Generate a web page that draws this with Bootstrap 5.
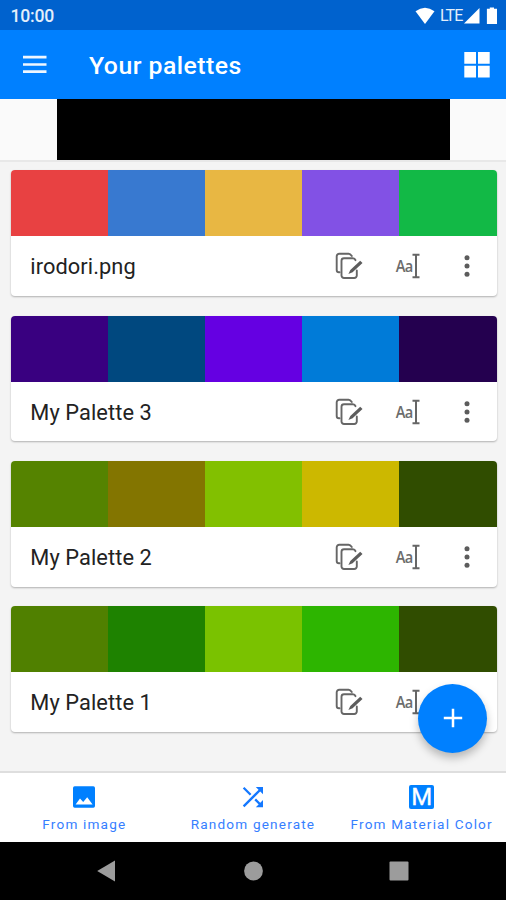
<!DOCTYPE html>
<html lang="en">
<head>
<meta charset="utf-8">
<meta name="viewport" content="width=device-width, initial-scale=1">
<title>Your palettes</title>
<link href="https://cdn.jsdelivr.net/npm/bootstrap@5.3.0/dist/css/bootstrap.min.css" rel="stylesheet">
<style>
  body { font-family: Roboto, "Liberation Sans", sans-serif; background: #f4f4f4; width: 506px; height: 900px; overflow: hidden; }
  svg { display: block; flex: none; overflow: visible; }
  .status { height: 30px; background: #0062ce; padding: 1px 8px 0 10.5px; font-size: 17.6px; color: #e3eefb; }
  .status-time { font-weight: 500; letter-spacing: -.2px; padding-top: 2px; }
  .status-net { font-size: 16px; width: 28px; letter-spacing: -.9px; line-height: 20px; padding-left: 5px; }
  .appbar { height: 69px; background: #0080ff; padding: 0 16px 0 22px; }
  .appbar h1 { font-size: 24.8px; font-weight: 500; letter-spacing: .48px; line-height: 30px; margin: 2px 0 0 41px; }
  .banner { height: 63px; background: #fafafa; border-bottom: 2px solid #e8e8e8; }
  .banner-slot { width: 393px; height: 61px; margin-left: 57px; background: #000; }
  .palettes { padding: 8.4px 9.5px 0 10.5px; gap: 19.6px; }
  .palette { height: 125.75px; border-radius: 4px; box-shadow: 0 1px 2px rgba(0,0,0,.28); }
  .swatches { height: 66px; border-radius: 4px 4px 0 0; }
  .palette-name { font-size: 21.8px; letter-spacing: .08px; color: #222; padding-top: 3px; }
  .palette-row { padding: 0 19px 0 19.8px; }
  .rename { width: 25px; height: 28px; margin: 0 36px 0 32px; }
  .rename span { font: 600 17px/28px "Open Sans", "Noto Sans", sans-serif; color: #6c6c6c; width: 17px; letter-spacing: -1px; display: inline-block; transform: scaleX(.86); transform-origin: 0 50%; padding-left: 1px; }
  .fab { right: 19px; bottom: 18.5px; width: 69px; height: 69px; background: #0080ff; box-shadow: 0 5px 8px rgba(0,0,0,.25); }
  .tabs { height: 71px; border-top: 2px solid #dedede; font-size: 13.6px; letter-spacing: 1.17px; }
  .tabs a { flex: 1 1 0; padding-top: 12px; line-height: 18px; gap: 6px; color: #367eff; }
  .m-icon { width: 25px; height: 24px; border-radius: 2px; background: #0080ff; font: 400 24px/25px Roboto, sans-serif; letter-spacing: 0; -webkit-text-stroke: .3px #fff; }
  .sysnav { height: 58px; background: #000; }
  .c0{background:#e84142}.c1{background:#3879d0}.c2{background:#e8b743}.c3{background:#8251e5}.c4{background:#12b946}
  .c5{background:#390080}.c6{background:#00487f}.c7{background:#6500e2}.c8{background:#007bd8}.c9{background:#24004f}
  .c10{background:#558300}.c11{background:#837500}.c12{background:#82c000}.c13{background:#ccb800}.c14{background:#304d00}
  .c15{background:#508000}.c16{background:#1e8200}.c17{background:#7ac200}.c18{background:#2db500}.c19{background:#304d00}
</style>
</head>
<body class="d-flex flex-column">
<svg width="0" height="0" class="position-absolute">
  <symbol id="copyedit" viewBox="0 0 28 28">
    <g fill="none" stroke="#666" stroke-width="1.9" stroke-linejoin="round" stroke-linecap="round">
      <path d="M4.6 20.3H4a2.3 2.3 0 0 1-2.3-2.3V4.3A2.6 2.6 0 0 1 4.3 1.7H13.6Q15.3 1.7 16.8 4"/>
      <path d="M20.5 8.2Q19.8 6.3 17.8 6.3H9A2.5 2.5 0 0 0 6.5 8.8V23.5A2.5 2.5 0 0 0 9 26H19.3A2.5 2.5 0 0 0 21.8 23.5V18.5"/>
    </g>
    <path d="M25.2 8.7L27.5 11L17.6 20.3L13.4 22L15.3 18Z" fill="#5c5c5c"/>
  </symbol>
  <symbol id="beam" viewBox="0 0 8 28">
    <path d="M.5 2.8H7.5M.5 25.2H7.5M4 2.8V25.2" fill="none" stroke="#666" stroke-width="2"/>
  </symbol>
  <symbol id="more" viewBox="0 0 22 28">
    <g fill="#5c5c5c"><circle cx="11" cy="5.7" r="2.5"/><circle cx="11" cy="14" r="2.5"/><circle cx="11" cy="22.3" r="2.5"/></g>
  </symbol>
</svg>

<div class="status d-flex align-items-center justify-content-between">
  <span class="status-time">10:00</span>
  <div class="d-flex align-items-center">
    <svg width="20" height="18" viewBox="0 0 20 18"><path d="M.5 4.2Q10-2.8 19.5 4.2L10 17Z" fill="#fff"/></svg>
    <span class="status-net">LTE</span>
    <svg width="17" height="18" viewBox="1 0 17 18"><path d="M17.5 1V16.5H2Z" fill="#fff"/></svg>
    <svg width="18" height="18" viewBox="0 0 18 18"><path d="M6.9 1.8H9.8V.5H14V1.8H17V17H6.9Z" fill="#fff"/></svg>
  </div>
</div>

<header class="appbar d-flex align-items-center text-white">
  <svg width="26" height="20" viewBox="0 0 26 20"><path d="M1 2.2H24.5M1 9.5H24.5M1 16.7H24.5" stroke="#eef6ff" stroke-width="2.7"/></svg>
  <h1>Your palettes</h1>
  <svg class="ms-auto" width="26" height="26" viewBox="0 0 26 26"><path d="M.3 0H12V11.7H.3ZM14 0H25.7V11.7H14ZM.3 13.7H12V25.4H.3ZM14 13.7H25.7V25.4H14Z" fill="#fff"/></svg>
</header>

<div class="banner"><div class="banner-slot"></div></div>

<main class="palettes position-relative flex-grow-1 d-flex flex-column">
  <section class="palette bg-white d-flex flex-column">
    <div class="swatches d-flex overflow-hidden"><i class="c0 flex-fill"></i><i class="c1 flex-fill"></i><i class="c2 flex-fill"></i><i class="c3 flex-fill"></i><i class="c4 flex-fill"></i></div>
    <div class="palette-row d-flex align-items-center flex-grow-1">
      <span class="palette-name me-auto">irodori.png</span>
      <svg width="28" height="28"><use href="#copyedit"/></svg>
      <div class="rename d-flex"><span>Aa</span><svg width="8" height="28"><use href="#beam"/></svg></div>
      <svg width="22" height="28"><use href="#more"/></svg>
    </div>
  </section>
  <section class="palette bg-white d-flex flex-column">
    <div class="swatches d-flex overflow-hidden"><i class="c5 flex-fill"></i><i class="c6 flex-fill"></i><i class="c7 flex-fill"></i><i class="c8 flex-fill"></i><i class="c9 flex-fill"></i></div>
    <div class="palette-row d-flex align-items-center flex-grow-1">
      <span class="palette-name me-auto">My Palette 3</span>
      <svg width="28" height="28"><use href="#copyedit"/></svg>
      <div class="rename d-flex"><span>Aa</span><svg width="8" height="28"><use href="#beam"/></svg></div>
      <svg width="22" height="28"><use href="#more"/></svg>
    </div>
  </section>
  <section class="palette bg-white d-flex flex-column">
    <div class="swatches d-flex overflow-hidden"><i class="c10 flex-fill"></i><i class="c11 flex-fill"></i><i class="c12 flex-fill"></i><i class="c13 flex-fill"></i><i class="c14 flex-fill"></i></div>
    <div class="palette-row d-flex align-items-center flex-grow-1">
      <span class="palette-name me-auto">My Palette 2</span>
      <svg width="28" height="28"><use href="#copyedit"/></svg>
      <div class="rename d-flex"><span>Aa</span><svg width="8" height="28"><use href="#beam"/></svg></div>
      <svg width="22" height="28"><use href="#more"/></svg>
    </div>
  </section>
  <section class="palette bg-white d-flex flex-column">
    <div class="swatches d-flex overflow-hidden"><i class="c15 flex-fill"></i><i class="c16 flex-fill"></i><i class="c17 flex-fill"></i><i class="c18 flex-fill"></i><i class="c19 flex-fill"></i></div>
    <div class="palette-row d-flex align-items-center flex-grow-1">
      <span class="palette-name me-auto">My Palette 1</span>
      <svg width="28" height="28"><use href="#copyedit"/></svg>
      <div class="rename d-flex"><span>Aa</span><svg width="8" height="28"><use href="#beam"/></svg></div>
      <svg width="22" height="28"><use href="#more"/></svg>
    </div>
  </section>
  <button class="fab btn position-absolute rounded-circle border-0 p-0 d-flex align-items-center justify-content-center" aria-label="Add">
    <svg width="20" height="20" viewBox="0 0 20 20"><path d="M10 .8V19.2M.8 10H19.2" stroke="#fff" stroke-width="2.5"/></svg>
  </button>
</main>

<nav class="tabs bg-white d-flex">
  <a class="d-flex flex-column align-items-center text-nowrap text-decoration-none">
    <svg width="24" height="24" viewBox="0 0 24 24"><path fill="#0080ff" fill-rule="evenodd" d="M2.7 1.2H21.3A1.7 1.7 0 0 1 23 2.9V21.1A1.7 1.7 0 0 1 21.3 22.8H2.7A1.7 1.7 0 0 1 1 21.1V2.9A1.7 1.7 0 0 1 2.7 1.2ZM3.6 19.5H20.6L15.2 12.2L11.2 17L8 13.6Z"/></svg>
    <span>From image</span>
  </a>
  <a class="d-flex flex-column align-items-center text-nowrap text-decoration-none">
    <svg width="24" height="24" viewBox="0 0 24 24"><path fill="none" stroke="#1478ff" stroke-width="2.3" d="M2.6 2.8L9.6 9.8M2.6 21.4L20.8 3.2M14.2 14.4L20.8 21"/><path fill="#1478ff" d="M14.8 2H22V9.2ZM14.8 22.2H22V15Z"/></svg>
    <span>Random generate</span>
  </a>
  <a class="d-flex flex-column align-items-center text-nowrap text-decoration-none">
    <div class="m-icon text-white text-center">M</div>
    <span>From Material Color</span>
  </a>
</nav>

<div class="sysnav d-flex justify-content-center align-items-center">
  <svg width="340" height="24" viewBox="0 0 340 24"><g fill="#9c9c9c"><path d="M14.2 12L32 1.6V22.4Z"/><circle cx="170.5" cy="12" r="9.4"/><rect x="306.5" y="2.5" width="19" height="19" rx="1"/></g></svg>
</div>
<script src="https://cdn.jsdelivr.net/npm/bootstrap@5.3.0/dist/js/bootstrap.bundle.min.js"></script>
</body>
</html>
